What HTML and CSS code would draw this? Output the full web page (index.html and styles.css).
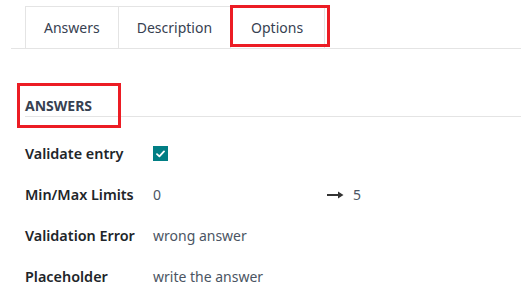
FILE: index.html
```html
<!DOCTYPE html>
<html>
<head>
<meta charset="utf-8">
<link rel="stylesheet" href="styles.css">
</head>
<body>
<div class="page">
  <div class="tabs">
    <div class="tab">Answers</div>
    <div class="tab">Description</div>
    <div class="tab tab-active">Options<span class="mark mark-tab"></span></div>
  </div>
  <div class="section">
    <div class="section-head">
      <span class="section-title">ANSWERS</span>
      <span class="mark mark-head"></span>
    </div>
    <div class="fields">
      <div class="label">Validate entry</div>
      <div class="value">
        <span class="check">
          <svg width="9" height="8" viewBox="0 0 9 8"><path d="M1 4.2 L3.4 6.4 L8 1.4" fill="none" stroke="#fff" stroke-width="1.8" stroke-linecap="round" stroke-linejoin="round"/></svg>
        </span>
      </div>
      <div class="label">Min/Max Limits</div>
      <div class="value limits">
        <span class="min">0</span>
        <span class="max">
          <svg class="arrow" width="17" height="8" viewBox="0 0 17 8"><path d="M0 3 H11 V0.5 L16.5 4 L11 7.5 V5 H0 Z" fill="#333"/></svg>
          <span>5</span>
        </span>
      </div>
      <div class="label">Validation Error</div>
      <div class="value">wrong answer</div>
      <div class="label">Placeholder</div>
      <div class="value">write the answer</div>
    </div>
  </div>
</div>
</body>
</html>
```
FILE: styles.css
```css
html, body {
  margin: 0;
  padding: 0;
  background: #fff;
}
body {
  font-family: "Noto Sans", "Open Sans", sans-serif;
  color: #212529;
}
.page {
  width: 521px;
  height: 302px;
  overflow: hidden;
}
.tabs {
  display: flex;
  margin: 6px 0 0 11px;
  padding-left: 14px;
  border-bottom: 1px solid #e4e4e4;
}
.tab {
  position: relative;
  height: 41px;
  padding: 0 18px;
  display: flex;
  align-items: center;
  font-size: 14px;
  color: #374151;
  border: 1px solid #e4e4e4;
  border-bottom: 0;
  margin-right: -1px;
}
.tab-active {
  padding: 0 21px 0 20px;
}
.mark {
  position: absolute;
  border: 3px solid #ec1c24;
  box-sizing: border-box;
  pointer-events: none;
}
.mark-tab {
  left: -1px;
  top: -2px;
  width: 100px;
  height: 42px;
}
.section {
  padding: 0 0 0 25px;
}
.section-head {
  position: relative;
  margin-top: 45px;
  height: 22px;
  border-bottom: 1px solid #e4e4e4;
  display: flex;
  align-items: center;
}
.section-title {
  font-size: 14px;
  font-weight: 700;
  color: #374151;
}
.mark-head {
  left: -8px;
  top: -11px;
  width: 104px;
  height: 45px;
}
.fields {
  display: grid;
  grid-template-columns: 128px 1fr;
  grid-auto-rows: 41px;
  margin-top: 16px;
  align-items: center;
}
.label {
  font-size: 14.4px;
  font-weight: 600;
  color: #212529;
}
.value {
  font-size: 14px;
  color: #4b5563;
}
.check {
  display: flex;
  width: 15px;
  height: 15px;
  background: #017e84;
  align-items: center;
  justify-content: center;
}
.limits {
  display: flex;
  align-items: center;
}
.min {
  width: 174px;
}
.max {
  display: flex;
  align-items: center;
  gap: 9px;
}
```
